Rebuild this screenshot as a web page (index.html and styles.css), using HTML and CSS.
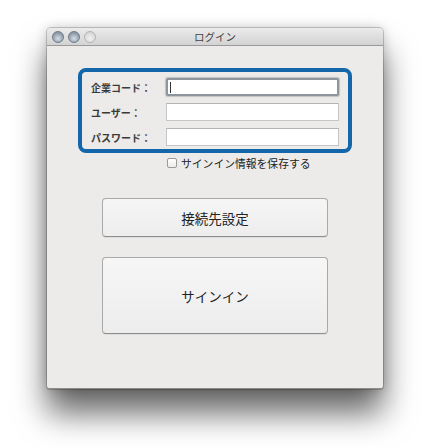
FILE: index.html
```html
<!DOCTYPE html>
<html lang="ja">
<head>
<meta charset="utf-8">
<title>ログイン</title>
<link rel="stylesheet" href="styles.css">
</head>
<body>
<div class="window">
  <div class="titlebar">
    <div class="lights">
      <span class="light"></span>
      <span class="light"></span>
      <span class="light light-off"></span>
    </div>
    <div class="title">ログイン</div>
    <div class="spacer"></div>
  </div>
  <div class="content">
    <div class="login-box">
      <div class="row">
        <span class="label">企業コード：</span>
        <div class="input input-focused"><span class="caret"></span></div>
      </div>
      <div class="row">
        <span class="label">ユーザー：</span>
        <div class="input"></div>
      </div>
      <div class="row">
        <span class="label">パスワード：</span>
        <div class="input"></div>
      </div>
    </div>
    <div class="remember">
      <span class="check"></span>
      <span class="remember-text">サインイン情報を保存する</span>
    </div>
    <div class="btn btn-settings">接続先設定</div>
    <div class="btn btn-signin">サインイン</div>
  </div>
</div>
</body>
</html>
```
FILE: styles.css
```css
html, body {
  margin: 0;
  padding: 0;
  background: #ffffff;
}
body {
  width: 430px;
  height: 448px;
  overflow: hidden;
  font-family: "Noto Sans CJK JP", "Noto Sans", sans-serif;
  color: #222;
}
.window {
  margin: 28px 0 0 47px;
  width: 336px;
  height: 361px;
  background: #ecebe9;
  border-radius: 4px 4px 3px 3px;
  box-shadow: 0 0 0 1px rgba(0,0,0,0.18), 0 0 12px rgba(0,0,0,0.2), 0 24px 32px rgba(0,0,0,0.6);
  overflow: hidden;
  box-sizing: border-box;
  border-bottom: 1px solid #8c8c8c;
}
.titlebar {
  display: grid;
  grid-template-columns: 1fr auto 1fr;
  align-items: center;
  background: linear-gradient(#ebebeb, #d3d3d3);
  border-bottom: 1px solid #9a9a9a;
  box-sizing: border-box;
  height: 18px;
}
.lights {
  display: flex;
  gap: 4px;
  padding-left: 5px;
}
.light {
  width: 12px;
  height: 12px;
  border-radius: 50%;
  box-sizing: border-box;
  border: 1px solid #6e7b88;
  background: radial-gradient(circle at 50% 65%, #d6dee6 0%, #9aa7b4 55%, #6d7a88 100%);
}
.light-off {
  border-color: #b4b4b4;
  background: radial-gradient(circle at 50% 65%, #f0f0f0 0%, #dcdcdc 60%, #c4c4c4 100%);
}
.title {
  font-size: 10.5px;
  color: #444;
  line-height: 17px;
}
.content {
  padding-top: 22px;
  display: flex;
  flex-direction: column;
}
.login-box {
  align-self: center;
  width: 274px;
  box-sizing: border-box;
  border: 4px solid #1466ab;
  border-radius: 8px;
  padding: 6px 9px 3px 9px;
  display: flex;
  flex-direction: column;
  gap: 7px;
}
.row {
  display: grid;
  grid-template-columns: 75px 173px;
  align-items: center;
  height: 18px;
}
.label {
  font-size: 10px;
  font-weight: 700;
  color: #3a3a3a;
  white-space: nowrap;
}
.input {
  height: 18px;
  box-sizing: border-box;
  background: #ffffff;
  border: 1px solid #c6c6c6;
  border-top-color: #b4b4b4;
  position: relative;
}
.input-focused {
  border: 2px solid #8e959c;
  border-radius: 2px;
  box-shadow: 0 0 1px 1px rgba(110,120,130,0.35);
}
.caret {
  position: absolute;
  left: 2px;
  top: 2px;
  width: 1px;
  height: 11px;
  background: #333;
}
.remember {
  display: flex;
  align-items: center;
  gap: 4px;
  margin: 4px 0 0 120px;
  height: 11px;
}
.check {
  width: 10px;
  height: 10px;
  box-sizing: border-box;
  border: 1px solid #9a9a9a;
  border-radius: 2px;
  background: linear-gradient(#ffffff, #ececec);
}
.remember-text {
  font-size: 10.8px;
  color: #222;
  white-space: nowrap;
}
.btn {
  align-self: center;
  width: 226px;
  box-sizing: border-box;
  border: 1px solid #a9a9a9;
  border-bottom-color: #8d8d8d;
  border-radius: 4px;
  background: linear-gradient(#f6f6f6, #ededed);
  box-shadow: 0 1px 0 rgba(0,0,0,0.06);
  display: flex;
  align-items: center;
  justify-content: center;
  font-size: 13.5px;
  color: #222;
}
.btn-settings {
  margin-top: 30px;
  height: 39px;
}
.btn-signin {
  margin-top: 20px;
  height: 77px;
}
```
